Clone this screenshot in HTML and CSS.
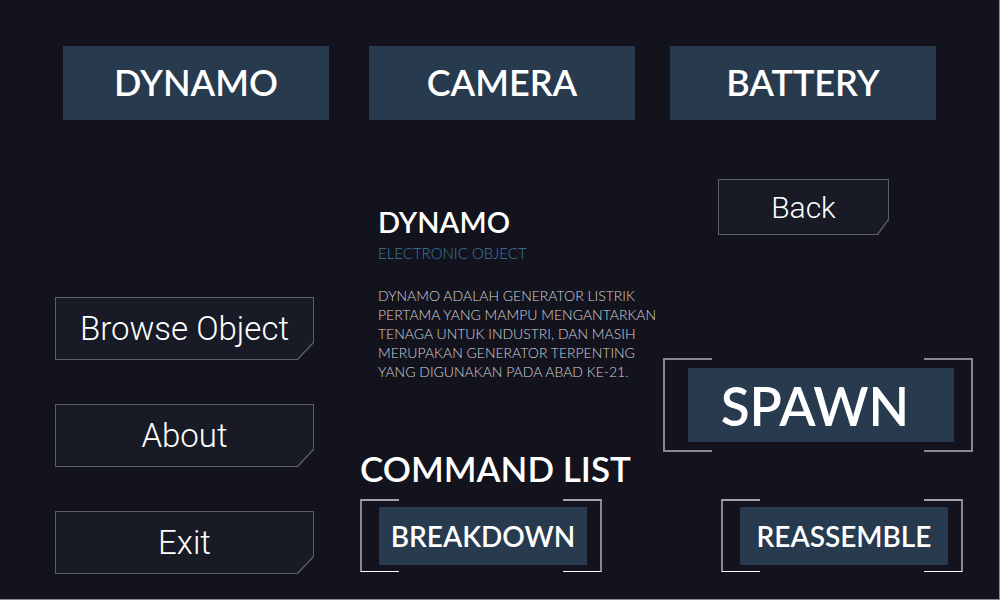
FILE: index.html
```html
<!DOCTYPE html>
<html lang="id">
<head>
<meta charset="utf-8">
<meta name="viewport" content="width=device-width, initial-scale=1">
<title>Dynamo</title>
<link rel="stylesheet" href="styles.css">
</head>
<body>
<div class="screen">
  <header class="objects">
    <button class="tile" type="button">DYNAMO</button>
    <button class="tile" type="button">CAMERA</button>
    <button class="tile" type="button">BATTERY</button>
  </header>
  <main class="content">
    <nav class="menu">
      <button class="cut" type="button"><span class="cut-label">Browse Object</span></button>
      <button class="cut" type="button"><span class="cut-label">About</span></button>
      <button class="cut" type="button"><span class="cut-label">Exit</span></button>
    </nav>
    <div class="middle">
      <article class="info">
        <h1 class="info-title">DYNAMO</h1>
        <p class="info-kind">ELECTRONIC OBJECT</p>
        <p class="info-text">DYNAMO ADALAH GENERATOR LISTRIK<br>PERTAMA YANG MAMPU MENGANTARKAN<br>TENAGA UNTUK INDUSTRI, DAN MASIH<br>MERUPAKAN GENERATOR TERPENTING<br>YANG DIGUNAKAN PADA ABAD KE-21.</p>
      </article>
      <section class="commands">
        <h2 class="commands-title">COMMAND LIST</h2>
        <div class="frame frame-small"><button class="tile tile-small" type="button">BREAKDOWN</button></div>
      </section>
    </div>
    <div class="actions">
      <button class="cut cut-back" type="button"><span class="cut-label">Back</span></button>
      <div class="frame frame-large"><button class="tile tile-large" type="button">SPAWN</button></div>
      <div class="frame frame-small frame-last"><button class="tile tile-small" type="button">REASSEMBLE</button></div>
    </div>
  </main>
</div>
</body>
</html>
```
FILE: styles.css
```css
*, *::before, *::after { box-sizing: border-box; }

body {
  margin: 0;
  background: #13131e;
  color: #fff;
  font-family: Lato, "Liberation Sans", sans-serif;
}

h1, h2, p { margin: 0; }

button {
  border: 0;
  padding: 0;
  color: inherit;
  font-family: inherit;
  cursor: pointer;
}

.screen {
  display: flex;
  flex-direction: column;
  min-height: 100vh;
  border: solid #8b8990;
  border-width: 0 1px 1px 0;
}

.objects {
  display: grid;
  grid-template-columns: 1fr 40px 1fr 35px 1fr;
  padding: 46px 63px 0;
}

.tile {
  height: 74px;
  padding-bottom: 2px;
  background: #273a4e;
  font-size: 36px;
  font-weight: 600;
  white-space: nowrap;
}

.objects .tile:nth-child(2) { grid-column: 3; }
.objects .tile:nth-child(3) { grid-column: 5; }

.content {
  flex: 1;
  display: grid;
  grid-template-columns: minmax(0, 259fr) minmax(0, 46fr) minmax(0, 291fr) minmax(0, 12fr) minmax(0, 310fr);
  padding: 0 26px 25px 55px;
}

.menu {
  display: flex;
  flex-direction: column;
  justify-content: flex-end;
  gap: 44px;
}

/* Panel with its lower right corner cut off */
.cut {
  --cut-x: 16px;
  --cut-y: 17px;
  position: relative;
  height: 63px;
  background: #5d5d67;
  font-family: Roboto, sans-serif;
  font-size: 33px;
  font-weight: 300;
}

.cut, .cut::before {
  clip-path: polygon(0 0, 100% 0, 100% calc(100% - var(--cut-y)), calc(100% - var(--cut-x)) 100%, 0 100%);
}

.cut::before {
  content: "";
  position: absolute;
  inset: 1px;
  background: #181b26;
}

.cut-label { position: relative; }

.cut-back {
  --cut-x: 11px;
  --cut-y: 15px;
  width: 100%;
  max-width: 171px;
  height: 56px;
  margin: 59px 0 0 55px;
  font-size: 30px;
}

.middle {
  grid-column: 3;
  display: flex;
  flex-direction: column;
  justify-content: space-between;
  padding-bottom: 2px;
}

.info { padding: 84px 0 0 18px; }

.info-title {
  font-size: 29px;
  font-weight: 600;
  line-height: 36px;
}

.info-kind {
  color: #3c7ba0;
  font-size: 15px;
  font-weight: 300;
  line-height: 26px;
}

.info-text {
  margin-top: 20px;
  color: #d2d2d6;
  font-size: 14px;
  font-weight: 300;
  line-height: 19px;
  white-space: nowrap;
}

.commands-title {
  font-size: 35px;
  font-weight: 600;
  line-height: 40px;
  margin-bottom: 11px;
  white-space: nowrap;
}

.actions {
  grid-column: 5;
  display: flex;
  flex-direction: column;
  padding-bottom: 2px;
}

/* Square brackets on both sides of a tile */
.frame {
  position: relative;
  display: grid;
}

.frame::before, .frame::after {
  content: "";
  position: absolute;
  top: 0;
  bottom: 0;
  width: 49px;
  border: 2px solid #88888d;
  pointer-events: none;
}

.frame::before { left: 0; border-right: 0; }
.frame::after { right: 0; border-left: 0; }

.frame-large {
  margin-top: 123px;
  padding: 10px 19px 10px 25px;
}

.frame-small {
  width: 100%;
  max-width: 242px;
  padding: 8px 15px 7px 19px;
}

.frame-small::before, .frame-small::after {
  width: 39px;
  border-top-color: #a4a4a8;
  border-bottom: 1px solid #fff;
}

.frame-last { margin: auto 0 0 58px; }

.tile-large {
  padding: 0 12px 0 0;
  font-size: 53px;
}

.tile-small {
  height: 58px;
  padding-bottom: 0;
  font-size: 28px;
}
```
